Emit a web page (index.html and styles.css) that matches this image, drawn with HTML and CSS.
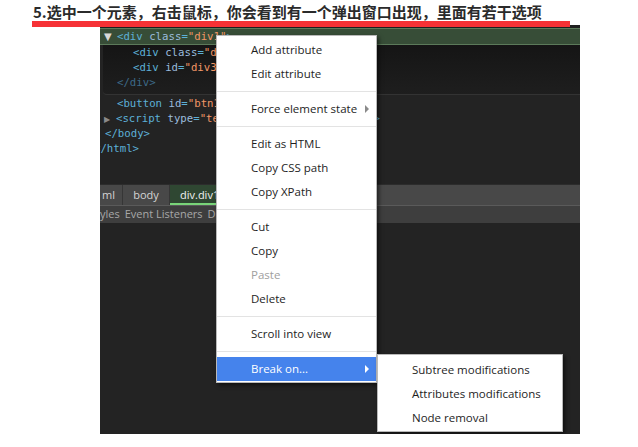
FILE: index.html
```html
<!DOCTYPE html>
<html>
<head>
<meta charset="utf-8">
<link rel="stylesheet" href="styles.css">
</head>
<body>
<div class="title">5.选中一个元素，右击鼠标，你会看到有一个弹出窗口出现，里面有若干选项</div>
<div class="redbar"></div>
<div class="devtools">
  <div class="topstrip"></div>
  <div class="row sel"><span class="tri">▼</span><span class="tag">&lt;div </span><span class="attr">class</span><span class="tag">=</span><span class="val">"div1"</span><span class="tag">&gt;</span></div>
  <div class="children">
    <div class="row in2"><span class="tag">&lt;div </span><span class="attr">class</span><span class="tag">=</span><span class="val">"div2"</span><span class="tag">&gt;&lt;/div&gt;</span></div>
    <div class="row in2"><span class="tag">&lt;div </span><span class="attr">id</span><span class="tag">=</span><span class="val">"div3"</span><span class="tag">&gt;&lt;/div&gt;</span></div>
    <div class="row in1 dim">&lt;/div&gt;</div>
  </div>
  <div class="code">
    <div class="row in1"><span class="tag">&lt;button </span><span class="attr">id</span><span class="tag">=</span><span class="val">"btn1"</span><span class="tag">&gt;</span></div>
    <div class="row"><span class="tri small">▶</span><span class="tag">&lt;script </span><span class="attr">type</span><span class="tag">=</span><span class="val">"text/javascript"</span><span class="tag">&gt;</span><span class="dots">…</span><span class="tag">&lt;/script&gt;</span></div>
    <div class="row in0"><span class="tag">&lt;/body&gt;</span></div>
    <div class="row inm"><span class="tag">&lt;/html&gt;</span></div>
  </div>
  <div class="crumbs">
    <span class="crumb first">ml</span>
    <span class="crumb second">body</span>
    <span class="crumb active">div.div1</span>
  </div>
  <div class="tabs">
    <span class="tab first">yles</span>
    <span class="tab">Event Listeners</span>
    <span class="tab">DOM Breakpoints</span>
  </div>

  <div class="menu">
    <div class="item">Add attribute</div>
    <div class="item">Edit attribute</div>
    <div class="sep"></div>
    <div class="item sub">Force element state<span class="arrow"></span></div>
    <div class="sep"></div>
    <div class="item">Edit as HTML</div>
    <div class="item">Copy CSS path</div>
    <div class="item">Copy XPath</div>
    <div class="sep"></div>
    <div class="item">Cut</div>
    <div class="item">Copy</div>
    <div class="item disabled">Paste</div>
    <div class="item">Delete</div>
    <div class="sep"></div>
    <div class="item">Scroll into view</div>
    <div class="sep"></div>
    <div class="item sub hl">Break on...<span class="arrow"></span></div>
  </div>
  <div class="submenu">
    <div class="item">Subtree modifications</div>
    <div class="item">Attributes modifications</div>
    <div class="item">Node removal</div>
  </div>
</div>
</body>
</html>
```
FILE: styles.css
```css
html, body {
  margin: 0;
  padding: 0;
  background: #ffffff;
}
body {
  width: 638px;
  height: 447px;
  overflow: hidden;
}
.title {
  padding: 3px 0 0 33px;
  height: 18px;
  line-height: 18px;
  font-family: "Noto Sans CJK SC", "Noto Sans", sans-serif;
  font-weight: 700;
  font-size: 15px;
  color: #2b2b2b;
  white-space: nowrap;
}
.redbar {
  position: relative;
  z-index: 2;
  margin-left: 32px;
  width: 538px;
  height: 6px;
  background: #f63236;
  margin-bottom: -2px;
}
.devtools {
  position: relative;
  margin-left: 100px;
  width: 480px;
  height: 409px;
  background: #232323;
  overflow: hidden;
  font-family: "DejaVu Sans Mono", "Liberation Mono", monospace;
  font-size: 10.7px;
}
.topstrip {
  height: 3px;
  background: #1f1f1f;
}
.row {
  height: 15px;
  line-height: 15px;
  white-space: nowrap;
  padding-left: 17px;
  color: #5db0d7;
}
.row.sel {
  height: 15px;
  background: #374d37;
  border-top: 1px solid #5c7a5a;
  border-bottom: 1px solid #5c7a5a;
  padding-left: 4px;
}
.tri {
  display: inline-block;
  width: 13px;
  color: #d8d8d8;
  font-size: 10px;
  font-family: "DejaVu Sans", sans-serif;
}
.tri.small {
  color: #8a8a8a;
  font-size: 8px;
  width: 12px;
}
.tag { color: #5db0d7; }
.attr { color: #9bbbdc; }
.val { color: #f29766; }
.dots { color: #888; }
.children {
  margin-left: 3px;
  height: 49px;
  background: linear-gradient(#151515, #1e1e1e);
  border-bottom-left-radius: 4px;
  border-bottom: 1px solid #333333;
}
.children .row.in2 { padding-left: 30px; }
.children .row.in1 { padding-left: 14px; }
.row.dim { color: #3d6a88; }
.code {
  padding-top: 1px;
  height: 88px;
}
.code .row { padding-left: 4px; }
.code .row.in1 { padding-left: 17px; }
.code .row.in0 { padding-left: 5px; }
.code .row.inm { padding-left: 0; margin-left: -6px; }
.crumbs {
  display: flex;
  height: 20px;
  background: #484848;
  border-top: 1px solid #2c2c2c;
  font-family: "Open Sans", "Noto Sans", sans-serif;
  font-size: 11px;
  line-height: 20px;
}
.crumb {
  box-sizing: border-box;
  color: #d4d4d4;
  border-right: 1px solid #363636;
  text-align: center;
}
.crumb.first { width: 23px; text-align: left; padding-left: 2px; }
.crumb.second { width: 47px; }
.crumb.active {
  padding: 0 10px;
  background: #2f4732;
  color: #f2f2f2;
  box-shadow: inset 0 -2px 0 #79d579;
}
.tabs {
  display: flex;
  gap: 5px;
  height: 17px;
  background: #3e3e3e;
  border-top: 1px solid #5a5a5a;
  font-family: "Open Sans", "Noto Sans", sans-serif;
  font-size: 11px;
  line-height: 16px;
  color: #a8a8a8;
  white-space: nowrap;
}
.tab.first { margin-left: 0; }

.menu, .submenu {
  position: absolute;
  background: #ffffff;
  border: 1px solid #b9b9b9;
  box-shadow: 2px 2px 4px rgba(0,0,0,0.55);
  font-family: "Open Sans", "Noto Sans", sans-serif;
  font-size: 11.5px;
  color: #1e1e1e;
}
.menu {
  left: 116px;
  top: 10px;
  width: 159px;
  padding: 2px 0 1px;
}
.submenu {
  left: 277px;
  top: 329px;
  width: 184px;
  padding: 3px 0 1px;
}
.item {
  position: relative;
  height: 24px;
  line-height: 24px;
  padding-left: 34px;
  white-space: nowrap;
}
.item.disabled { color: #a0a0a0; }
.item.hl {
  background: #4583ec;
  color: #ffffff;
}
.sep {
  height: 1px;
  margin: 5px 0;
  background: #e3e3e3;
}
.arrow {
  position: absolute;
  left: 148px;
  top: 8px;
  width: 0;
  height: 0;
  border-top: 4px solid transparent;
  border-bottom: 4px solid transparent;
  border-left: 4px solid #8a8a8a;
}
.hl .arrow { border-left-color: #ffffff; }
```
